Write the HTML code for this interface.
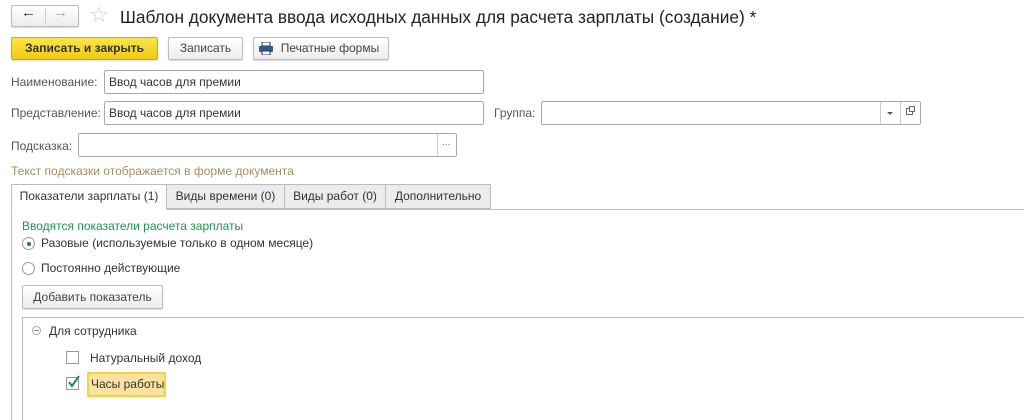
<!DOCTYPE html>
<html><head><meta charset="utf-8"><style>
*{box-sizing:border-box;margin:0;padding:0}
html,body{width:1024px;height:420px;overflow:hidden}
body{background:#fff;font-family:"Liberation Sans",Arial,sans-serif;font-size:12px;color:#333;position:relative}
.a{position:absolute;white-space:nowrap}
.btn{position:absolute;border:1px solid #bbb;border-radius:2px;background:linear-gradient(#fff,#ececec);box-shadow:0 1px 1px rgba(0,0,0,.15);text-align:center;color:#444;font-size:12px;white-space:nowrap}
.inp{position:absolute;border:1px solid #a9a9a9;border-radius:2px;background:#fff;height:24px;padding-left:4px;line-height:22px;font-size:12px;color:#333}
.lbl{position:absolute;color:#555;font-size:12px}
.tab{position:absolute;top:184px;height:25px;border:1px solid #bbb;background:#ececec;line-height:23px;text-align:center;color:#333}
</style></head><body>
<div class="btn" style="left:11px;top:5px;width:68px;height:22px"></div>
<div class="a" style="left:45px;top:8px;width:1px;height:16px;background:#ccc"></div>
<div class="a" style="left:21px;top:4px;font-size:15px;color:#333">&#8592;</div>
<div class="a" style="left:53px;top:4px;font-size:15px;color:#aaa">&#8594;</div>
<div class="a" style="left:89px;top:2px;font-size:22px;color:#ccc">&#9734;</div>
<div class="a" style="left:120px;top:7px;font-size:17.3px;color:#222">Шаблон документа ввода исходных данных для расчета зарплаты (создание) *</div>

<div class="btn" style="left:11px;top:37px;width:147px;height:23px;background:linear-gradient(#fae34a,#f0cc10);border-color:#c9aa10;font-weight:bold;color:#333;line-height:21px">Записать и закрыть</div>
<div class="btn" style="left:168px;top:37px;width:75px;height:23px;line-height:21px">Записать</div>
<div class="btn" style="left:253px;top:37px;width:136px;height:23px;line-height:21px;padding-left:18px">Печатные формы</div>
<svg class="a" style="left:259px;top:42px" width="14" height="13"><rect x="3" y="0" width="8" height="4" fill="none" stroke="#336" stroke-width="1"/><rect x="0" y="4" width="14" height="6" rx="1" fill="#2d5a8c"/><rect x="3" y="9" width="8" height="4" fill="#fff" stroke="#336"/></svg>

<div class="lbl" style="left:11px;top:75px">Наименование:</div>
<div class="inp" style="left:104px;top:70px;width:380px">Ввод часов для премии</div>
<div class="lbl" style="left:11px;top:106px">Представление:</div>
<div class="inp" style="left:104px;top:101px;width:380px">Ввод часов для премии</div>
<div class="lbl" style="left:494px;top:106px">Группа:</div>
<div class="inp" style="left:541px;top:101px;width:380px"></div>
<div class="a" style="left:880px;top:102px;width:1px;height:22px;background:#ccc"></div>
<div class="a" style="left:900px;top:102px;width:1px;height:22px;background:#ccc"></div>
<div class="a" style="left:887px;top:112px;border:3px solid transparent;border-top:3px solid #555"></div>
<div class="a" style="left:906px;top:108px;width:7px;height:7px;border:1px solid #666"></div>
<div class="a" style="left:909px;top:106px;width:6px;height:6px;border:1px solid #666;background:#fff"></div>

<div class="lbl" style="left:11px;top:139px">Подсказка:</div>
<div class="inp" style="left:78px;top:133px;width:379px"></div>
<div class="a" style="left:437px;top:134px;width:1px;height:22px;background:#ccc"></div>
<div class="a" style="left:442px;top:137px;color:#777;font-size:10px">...</div>
<div class="a" style="left:11px;top:164px;color:#a0905e">Текст подсказки отображается в форме документа</div>

<div class="a" style="left:11px;top:209px;width:1013px;height:1px;background:#bbb"></div>
<div class="a" style="left:11px;top:209px;width:1px;height:211px;background:#bbb"></div>
<div class="tab" style="left:11px;width:156px;background:#fff;border-bottom:1px solid #fff;height:26px">Показатели зарплаты (1)</div>
<div class="tab" style="left:166px;width:119px">Виды времени (0)</div>
<div class="tab" style="left:284px;width:102px">Виды работ (0)</div>
<div class="tab" style="left:385px;width:106px">Дополнительно</div>

<div class="a" style="left:22px;top:219px;color:#1e9650">Вводятся показатели расчета зарплаты</div>
<div class="a" style="left:22px;top:237px;width:13px;height:13px;border:1px solid #999;border-radius:50%;background:#fff"></div>
<div class="a" style="left:27px;top:242px;width:4px;height:4px;border-radius:50%;background:#2a7a4a"></div>
<div class="a" style="left:41px;top:236px">Разовые (используемые только в одном месяце)</div>
<div class="a" style="left:22px;top:262px;width:13px;height:13px;border:1px solid #999;border-radius:50%;background:#fff"></div>
<div class="a" style="left:41px;top:261px">Постоянно действующие</div>
<div class="btn" style="left:22px;top:285px;width:141px;height:24px;line-height:22px">Добавить показатель</div>

<div class="a" style="left:22px;top:317px;width:1010px;height:120px;border:1px solid #bbb"></div>
<div class="a" style="left:32px;top:326px;width:9px;height:9px;border:1px solid #aaa;border-radius:50%"></div>
<div class="a" style="left:34px;top:330px;width:5px;height:1px;background:#888"></div>
<div class="a" style="left:49px;top:324px">Для сотрудника</div>
<div class="a" style="left:66px;top:351px;width:13px;height:13px;border:1px solid #999;background:#fff"></div>
<div class="a" style="left:90px;top:351px">Натуральный доход</div>
<div class="a" style="left:66px;top:377px;width:13px;height:13px;border:1px solid #999;background:#fff"></div>
<svg class="a" style="left:66px;top:374px" width="15" height="15"><path d="M3 8 L6 12 L13 2" fill="none" stroke="#1e8a50" stroke-width="2"/></svg>
<div class="a" style="left:87px;top:372px;width:79px;height:25px;background:#fbe2a0;border:2px solid #f5d240;line-height:21px;padding-left:2px">Часы работы</div>
</body></html>
